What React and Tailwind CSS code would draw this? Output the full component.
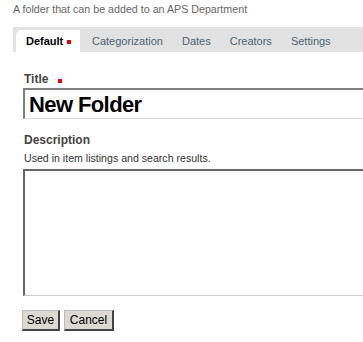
export default function App() {
  return (
    <div className="w-[363px] h-[342px] bg-white overflow-hidden" style={{ fontFamily: '"Liberation Sans", Arial, sans-serif' }}>
      <div className="pl-[13px] pt-[3px] text-[10.7px] leading-[13px] text-[#666]">A folder that can be added to an APS Department</div>
      <div className="mt-[11px] ml-[13px] h-[25px] bg-[#e2e2e2] flex items-end pl-[3px]">
        <div className="h-[22px] w-[64px] bg-white rounded-tl-[5px] flex items-center pl-[10px] text-[11px] font-bold text-black">
          Default<span className="ml-[4px] inline-block w-[4px] h-[4px] bg-[#e00] mt-[2px]"></span>
        </div>
        <div className="flex h-[22px] items-center text-[11px] text-[#4c6372]">
          <span className="ml-[12px]">Categorization</span>
          <span className="ml-[19px]">Dates</span>
          <span className="ml-[19px]">Creators</span>
          <span className="ml-[19px]">Settings</span>
        </div>
      </div>
      <div className="pl-[24px] pt-[20px]">
        <div className="flex items-center text-[12px] font-bold text-[#444] leading-[14px]">
          Title<span className="ml-[10px] inline-block w-[4px] h-[4px] bg-[#e00] mt-[3px]"></span>
        </div>
      </div>
      <div className="ml-[23px] mt-[2px] h-[31px] border-t-2 border-l-2 border-[#808080] border-b border-b-[#ddd] flex items-center pl-[4px] text-[22px] font-bold text-black tracking-[-0.6px]">
        New Folder
      </div>
      <div className="pl-[24px] pt-[14px] text-[12px] font-bold text-[#444] leading-[14px]">Description</div>
      <div className="pl-[24px] pt-[5px] text-[10.6px] text-[#333] leading-[13px]">Used in item listings and search results.</div>
      <div className="ml-[23px] mt-[4px] h-[127px] border-t-2 border-l-2 border-[#666] border-b border-b-[#ccc]"></div>
      <div className="flex gap-[4px] ml-[22px] mt-[14px]">
        <button className="h-[21px] w-[38px] bg-[#dcd9d3] text-[12px] text-black border border-[#bbb] border-r-2 border-b-2 border-r-[#444] border-b-[#444] leading-none">Save</button>
        <button className="h-[21px] w-[50px] bg-[#dcd9d3] text-[12px] text-black border border-[#bbb] border-r-2 border-b-2 border-r-[#444] border-b-[#444] leading-none">Cancel</button>
      </div>
    </div>
  );
}
